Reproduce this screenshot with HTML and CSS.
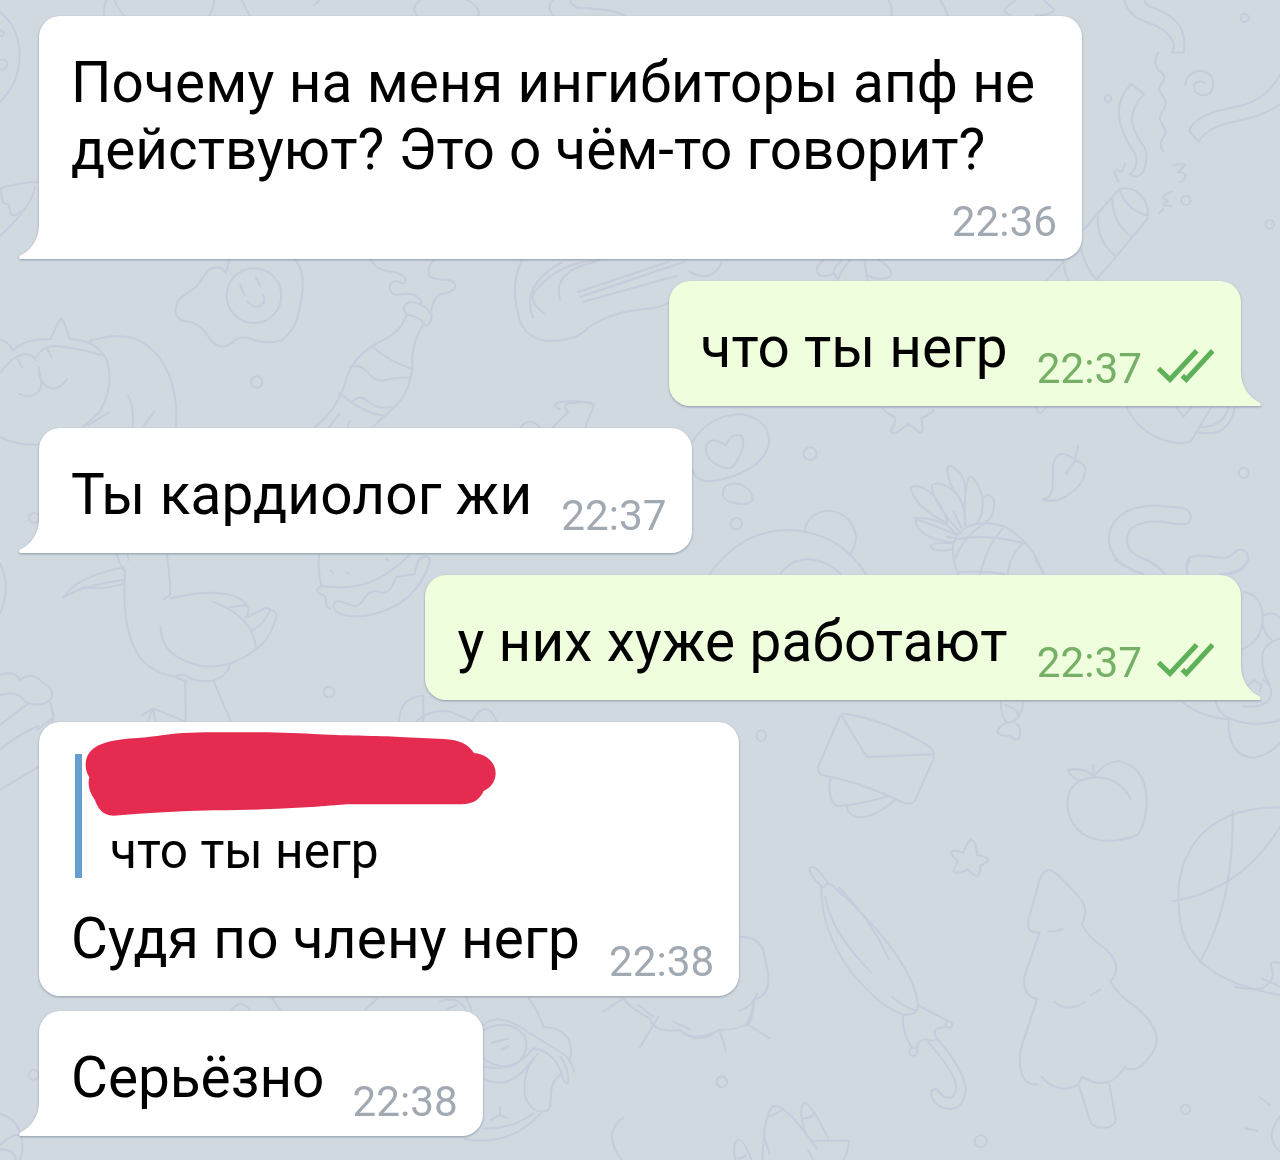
FILE: index.html
```html
<!DOCTYPE html>
<html lang="ru">
<head>
  <meta charset="UTF-8">
  <meta name="viewport" content="width=device-width, initial-scale=1.0">
  <title>Chat</title>
  <link rel="stylesheet" href="styles.css">
</head>
<body>

  <!-- Wallpaper doodles -->
  <svg class="wallpaper" viewBox="0 0 1280 1160" aria-hidden="true">
    <!-- cookie, carrot -->
    <g transform="scale(.408163 .333333)">
      <path d="M0 35Q48 85 48 165Q48 250 0 305M0 90Q12 97 10 103Q6 110 0 108M0 180Q18 176 18 194Q14 212 0 208"/>
      <path d="M0 565Q40 548 95 545M3 570Q5 600 8 608L22 614L25 640Q35 655 50 634M85 560Q82 595 60 628Q35 670 0 708"/>
      <path d="M260 0Q253 25 255 47M280 0Q290 30 305 47M525 0Q523 30 512 47M592 0L612 47M783 0L770 16M1030 0Q1005 25 1022 47M1145 0Q1180 25 1172 47M1355 0Q1335 22 1358 47M1397 0Q1400 20 1420 24Q1440 22 1455 27Q1500 28 1530 47"/>
    </g>
    <!-- party popper and streamers -->
    <g transform="translate(880 0) scale(.333333)">
      <path d="M25 0Q38 20 35 47M180 0Q195 22 204 47M408 0L374 25Q372 42 392 44M490 0L522 28Q520 45 466 46"/>
      <path d="M733 0Q745 50 800 66Q870 90 882 135Q882 150 875 157L912 158Q920 90 880 56Q845 30 815 22Q795 15 793 0"/>
      <path d="M835 157Q815 195 840 215Q865 232 843 252Q830 270 850 290Q866 312 846 336Q832 355 850 378Q865 395 845 420Q838 440 850 454"/>
      <path d="M754 252L792 283Q745 330 760 380Q770 410 795 445Q805 480 790 515Q770 540 750 522Q778 500 765 460Q720 400 716 340Q715 290 754 252Z"/>
      <path d="M916 256Q920 215 960 212Q1000 215 1000 255Q995 288 965 286Q938 280 943 255Q950 238 974 248"/>
      <path d="M1200 225Q1150 310 1060 322Q940 345 928 393L955 424Q985 380 1060 365Q1150 350 1200 312"/>
      <path d="M735 492L724 516Q705 508 702 515L716 546M880 496Q910 488 916 495L894 516Q915 518 916 524Q915 545 899 545M875 575Q850 582 850 596L865 602Q845 612 852 616L875 618M838 640L850 627"/>
      <path d="M610 690L717 568Q760 555 790 595Q808 625 803 655Q755 715 650 838M717 568Q745 635 800 645M697 592Q695 665 755 712M654 652Q650 720 705 767M604 748Q615 800 648 838M500 840L552 785Q552 815 565 840"/>
      <circle cx="1094" cy="54" r="12"/><circle cx="684" cy="295" r="10"/><circle cx="918" cy="601" r="14"/><circle cx="1169" cy="673" r="13"/>
    </g>
    <!-- guitar, bow -->
    <path d="M522 260Q510 285 518 312Q521 336 545 341Q575 342 588 328Q610 312 645 309Q672 308 690 284M533 318Q520 285 562 262M545 314Q525 300 538 288Q560 262 600 260M560 300Q552 270 596 262M578 292L668 262M580 297L684 262M583 302L676 276M690 272Q712 284 722 262"/>
    <g transform="translate(640 260) scale(.408163 .333333)">
      <path d="M450 0Q420 30 442 47Q465 50 475 38L485 60M495 0Q470 30 475 38M515 0Q490 35 485 60M550 0L557 60M585 0Q625 30 612 50Q590 65 555 45"/>
    </g>
    <!-- egg, cat, bottle -->
    <g transform="translate(0 240) scale(.333333)">
      <path d="M687 60L678 98Q660 70 625 90L590 140L550 167Q525 185 527 220Q535 245 575 247Q605 255 630 297Q665 340 705 300Q725 285 755 297Q800 315 845 300Q890 270 902 190Q920 100 887 60"/>
      <circle cx="762" cy="167" r="82"/>
      <path d="M720 133L733 164M768 113L781 139M743 184Q770 215 790 190Q795 178 790 165"/>
      <circle cx="770" cy="426" r="17"/>
      <path d="M0 298Q25 305 38 332Q75 295 152 297L178 242Q184 232 190 242L211 298Q290 300 320 360Q345 430 300 515L250 560M38 332L50 320M0 400Q35 350 70 343Q100 342 108 362M115 385Q130 430 120 448Q100 480 57 462M110 350Q130 315 165 318Q240 325 303 345M118 380Q110 400 130 430Q165 465 201 418M54 359L66 382M142 328L155 352M0 590Q50 618 115 614"/>
      <path d="M270 303Q340 280 400 295Q500 330 525 470Q532 520 527 560M385 468Q405 510 397 560M325 517L265 556M463 514L430 560"/>
      <path d="M1112 60Q1125 85 1160 93Q1215 98 1218 125Q1210 135 1195 124Q1165 120 1170 150Q1180 168 1200 163Q1255 155 1265 190M1303 60Q1280 75 1288 108Q1300 120 1340 119Q1372 125 1364 145Q1350 160 1318 162Q1298 180 1295 210"/>
      <path d="M1220 223L1210 207Q1215 185 1238 186Q1280 195 1295 225Q1295 250 1278 258L1272 250Q1255 230 1220 223Q1205 275 1150 300Q1055 345 1035 430Q1010 510 945 560M1272 250Q1240 300 1237 350Q1240 450 1180 505Q1140 540 1120 560M1115 318Q1160 360 1231 385M1052 378Q1085 372 1105 400Q1130 430 1165 418Q1200 410 1227 413M1019 458Q1080 515 1150 527M1060 483Q1080 462 1105 485Q1135 510 1175 500M1018 522L988 560M1050 542L1042 560"/>
    </g>
    <!-- thought bubble, pineapple, leaf, snake -->
    <g transform="translate(680 400) scale(.382653 .333333)">
      <path d="M33 125Q75 45 160 42Q240 60 232 135Q215 205 120 235Q45 260 33 210M120 136Q135 95 160 108Q175 130 150 180Q140 205 125 205Q65 190 67 140Q80 105 120 136ZM116 262Q130 245 160 253Q190 270 190 300Q175 318 145 310Q100 300 116 262"/>
      <ellipse cx="147" cy="371" rx="15" ry="17"/><ellipse cx="340" cy="161" rx="17" ry="19"/><ellipse cx="1473" cy="218" rx="13" ry="15"/>
      <path d="M78 522Q160 390 285 390Q415 395 486 522M325 392Q335 335 390 332Q450 340 460 410Q458 445 446 458M262 522Q290 477 340 477Q390 485 420 522"/>
      <path d="M532 26Q535 38 560 50Q567 65 550 92Q552 102 567 97L597 72L626 97Q635 100 635 90L631 54Q665 35 662 30M930 22Q940 55 956 22M1168 22Q1205 115 1305 130Q1335 130 1340 115L1388 22M1297 22L1316 50L1337 22M1362 82Q1420 80 1434 22M1354 97Q1435 115 1450 22"/>
      <path d="M723 405Q610 350 615 360Q620 415 715 428M723 405Q695 355 615 353M700 370Q610 320 603 262Q625 250 660 283Q690 325 700 370M735 400Q660 310 658 255Q680 240 718 275Q745 310 747 375M717 275Q695 230 700 200Q710 190 735 225Q748 250 745 290M745 375Q740 270 756 230Q775 230 790 290Q795 340 778 365M790 300Q805 270 820 300Q825 350 798 366M715 335L735 382M697 410L720 415M713 430Q660 425 655 438Q665 460 713 448"/>
      <path d="M726 522Q700 440 726 402Q770 350 850 380Q925 430 948 522M723 418Q800 400 900 430M797 369Q740 410 720 475M843 386Q800 440 785 522M896 429Q860 470 857 522M726 517Q790 510 850 522"/>
      <path d="M1040 137L1033 180L1009 220M1033 180Q1000 150 983 170Q972 190 975 230Q975 280 962 292L948 299Q960 305 990 300Q1055 265 1060 210Q1058 190 1033 180"/>
      <path d="M1210 522Q1120 490 1120 410Q1135 315 1250 317L1320 325Q1345 345 1330 368Q1315 378 1260 365Q1170 360 1168 420Q1168 460 1220 480Q1260 505 1265 522M1326 522Q1320 490 1330 475Q1345 460 1420 475Q1440 470 1457 450Q1485 445 1484 475Q1480 515 1435 522"/>
    </g>
    <!-- hat -->
    <path d="M552 428L568 412Q560 402 575 403Q590 400 594 405L585 428M560 409Q550 405 560 402Q580 400 592 404M520 428Q530 415 540 428"/>
    <circle cx="34" cy="518" r="5"/>
    <!-- stork, cake, burger -->
    <g transform="translate(0 530) scale(.333333)">
      <path d="M0 100Q35 170 0 250M350 70Q355 100 375 125M383 72L385 90M500 70Q512 150 510 195L492 208M372 112Q230 140 190 202Q250 165 375 150M190 202L250 172Q320 180 372 160M375 120L373 200Q375 330 430 395Q465 430 525 440M510 205Q680 165 738 220M638 215Q760 260 768 355M681 233L740 225Q752 240 738 262L795 235Q810 232 810 242Q790 285 755 303M810 242Q830 240 830 258Q810 330 768 358Q690 420 600 407Q480 380 482 288M525 440Q550 425 575 448Q600 455 640 452Q680 440 690 405M525 440L560 455M555 455L558 574M640 452L692 574M425 555L460 535L555 574M445 574L455 540M460 540L466 574"/>
      <path d="M0 435Q45 420 60 450Q95 420 130 460Q170 480 150 510Q120 535 75 515Q55 480 0 495M85 520L0 585M150 515Q160 550 158 565L110 600"/>
      <circle cx="987" cy="486" r="16"/>
      <path d="M957 72Q953 130 965 168Q1080 185 1160 130Q1200 105 1228 75M965 168Q945 175 955 190Q970 192 978 205Q975 230 990 237M1000 230Q1000 205 1040 220Q1070 240 1090 210Q1110 175 1140 187Q1165 190 1175 170L1190 140L1243 133L1255 90Q1285 65 1290 95Q1250 225 1110 255Q1015 270 1000 230M1040 125L1046 130M992 122L998 128M1158 86L1164 91"/>
      <path d="M1197 574Q1200 500 1270 497L1270 574M1250 574Q1290 535 1350 545L1420 574M1415 575Q1460 500 1490 574"/>
    </g>
    <g transform="translate(0 710) scale(.333333)">
      <path d="M0 118Q60 70 115 48M0 240L116 170M158 0Q165 20 155 38"/>
    </g>
    <!-- envelope, candy, peach, star, ball -->
    <g transform="translate(680 680) scale(.382653 .333333)">
      <ellipse cx="212" cy="167" rx="13" ry="16"/>
      <path d="M418 108Q425 98 440 103Q560 130 655 203Q665 213 663 235L615 360Q605 378 580 366Q470 305 370 285Q358 275 363 255ZM424 110L483 222Q488 232 500 231L663 223M393 294Q385 350 405 375Q430 385 545 348M436 380Q440 410 475 412Q510 410 565 357"/>
      <path d="M838 65Q838 110 855 127Q890 130 897 65M850 75Q880 85 885 105M855 127Q830 140 830 158Q840 170 862 167Q875 185 887 175Q895 145 878 130"/>
      <path d="M1045 303Q1015 285 1014 270Q1055 260 1080 288L1080 254M1045 303Q1080 285 1120 297Q1155 310 1178 356M1083 288Q1110 245 1145 243Q1220 260 1220 370Q1215 440 1195 465Q1160 482 1110 483Q1015 470 1012 365Q1015 320 1045 303"/>
      <path d="M761 478Q775 485 776 525Q800 528 807 540Q800 550 785 556Q787 580 777 590Q765 585 752 567Q735 580 716 578Q712 570 727 543Q710 530 708 515Q718 508 740 519Q750 485 761 478Z"/>
      <path d="M1568 382Q1420 380 1350 480Q1300 560 1303 650Q1303 700 1310 740Q1340 900 1568 945M1444 394Q1450 660 1359 845M1287 664Q1470 630 1568 440M1312 65Q1360 110 1432 118M1400 65Q1410 125 1500 132Q1550 130 1568 120M1434 118Q1430 230 1500 233Q1540 225 1568 188M1480 20L1500 0L1520 15L1515 35M1525 0Q1560 30 1535 65Q1510 85 1470 78"/>
      <path d="M1568 850Q1535 838 1548 870Q1555 905 1520 925Q1490 930 1450 920M1520 895L1568 920"/>
    </g>
    <g transform="translate(1020 560) scale(.333333)">
      <path d="M45 0Q65 20 72 42M285 0Q320 25 370 42M380 0Q420 20 435 42M510 0Q495 20 502 42M685 0Q660 42 600 42M670 95Q730 105 728 180Q725 245 665 268M735 165Q760 150 780 175M730 165Q722 215 755 240M780 235Q735 250 728 280Q720 330 750 375"/>
    </g>
    <!-- umbrella, fir tree, hand -->
    <g transform="translate(680 900) scale(.382653 .333333)">
      <path d="M372 -40Q340 -70 338 -95Q345 -105 360 -90L386 -55Q380 -35 369 -38M369 -38Q370 100 450 220Q530 330 588 344Q620 345 622 315Q610 190 440 0L400 -42Q390 -50 383 -48M380 -10Q390 90 500 218M415 -38Q500 60 546 178M555 290Q580 320 618 332M622 315L698 362M583 347Q580 400 605 440M692 380Q660 385 667 405L672 418Q655 428 645 418Q620 420 620 443M672 415Q735 500 747 560Q745 620 710 627Q665 625 657 585Q655 565 672 568Q690 598 710 592Q725 580 720 545Q700 490 647 425"/>
      <ellipse cx="703" cy="373" rx="9" ry="10"/><ellipse cx="610" cy="455" rx="11" ry="12"/><ellipse cx="109" cy="545" rx="14" ry="16"/><ellipse cx="786" cy="724" rx="16" ry="18"/><ellipse cx="1321" cy="628" rx="12" ry="14"/>
      <path d="M935 97Q905 100 910 60L940 -60Q950 -92 967 -90Q985 -85 1045 -5Q1070 25 1050 72Q1065 110 1110 145Q1160 195 1125 245Q1145 285 1190 320Q1275 400 1230 465Q1200 520 1165 505L1163 500Q1120 580 1050 530M940 97L900 230Q895 290 935 297M932 302L890 450Q880 560 935 553M945 530Q985 585 1040 555L1050 530M963 93Q980 98 1000 87M978 305Q1015 340 1057 306M1073 286L1098 269M1042 555L1072 665Q1085 690 1125 680Q1140 670 1138 655L1122 550"/>
      <path d="M155 110Q220 110 222 180Q250 280 193 300Q190 370 175 372Q150 390 100 390Q50 440 0 390M103 390L120 452M175 372L235 415M202 280Q190 320 155 332"/>
      <path d="M215 780Q220 630 245 618Q265 615 300 660Q340 715 358 747M228 650Q250 645 265 630M235 762Q220 720 218 690M330 705Q305 625 325 608Q340 605 388 716M320 655Q345 655 352 640M347 722L442 722Q440 750 428 780M145 780Q135 730 152 720Q165 715 187 780M150 775Q165 775 173 765M335 750L347 776M1515 592L1542 615M1478 685L1508 693M1568 650Q1525 710 1568 755"/>
    </g>
    <!-- pilot dog, sheep -->
    <g transform="translate(440 970) scale(.333333)">
      <path d="M0 95Q50 75 75 115M20 118L50 105M80 85L95 122M265 85Q300 130 310 172Q360 170 385 205Q400 235 388 275M130 165Q165 130 230 165L375 255Q400 280 402 305M130 180Q210 140 255 200Q270 250 225 285Q175 300 130 265M130 290Q220 310 280 235Q350 245 370 330Q385 350 385 325Q380 280 360 260M130 325Q210 370 280 265M295 250Q245 300 255 380Q280 440 325 420Q335 400 332 370Q335 330 365 310M155 218L205 206M185 238L205 228M180 410L180 435L202 445M180 435L152 450M130 475Q210 480 280 430M75 508Q210 530 300 432"/>
      <path d="M550 85L488 125M550 85Q570 115 630 145Q640 190 720 180Q760 220 835 182M920 160Q940 130 940 90M655 140L600 232M700 155L750 178M595 105L640 140M550 443Q485 490 545 570"/>
      <circle cx="846" cy="336" r="15"/>
    </g>
    <g transform="translate(0 980) scale(.333333)">
      <circle cx="101" cy="284" r="15"/>
      <path d="M0 403Q40 410 60 455Q75 500 60 540M0 495Q30 465 55 465M0 508Q45 510 48 540"/>
    </g>
    <path d="M232 1010Q240 998 250 1010M272 998L280 1010M365 1010L378 998"/>
  </svg>

  <main class="chat">
    <div class="message incoming stacked">
      <p class="text"><span class="wide">Почему на меня ингибиторы апф не</span><br>действуют? Это о чём-то говорит?</p>
      <span class="time">22:36</span>
      <svg class="tail" viewBox="0 0 22 34"><path d="M20 0C20 14 12 26 1 30.5Q-1 34 2 34H22V0Z"/></svg>
    </div>

    <div class="message outgoing">
      <p class="text">что ты негр</p>
      <span class="time">22:37</span>
      <svg class="checks" viewBox="0 0 57 34"><path d="M1.5 19.5L13 30.5L39.7 1.8M25.3 26.6L29.3 30.5L55.7 1.8"/></svg>
      <svg class="tail" viewBox="0 0 22 34"><path d="M20 0C20 14 12 26 1 30.5Q-1 34 2 34H22V0Z"/></svg>
    </div>

    <div class="message incoming">
      <p class="text wide">Ты кардиолог жи</p>
      <span class="time">22:37</span>
      <svg class="tail" viewBox="0 0 22 34"><path d="M20 0C20 14 12 26 1 30.5Q-1 34 2 34H22V0Z"/></svg>
    </div>

    <div class="message outgoing">
      <p class="text wide">у них хуже работают</p>
      <span class="time">22:37</span>
      <svg class="checks" viewBox="0 0 57 34"><path d="M1.5 19.5L13 30.5L39.7 1.8M25.3 26.6L29.3 30.5L55.7 1.8"/></svg>
      <svg class="tail" viewBox="0 0 22 34"><path d="M20 0C20 14 12 26 1 30.5Q-1 34 2 34H22V0Z"/></svg>
    </div>

    <div class="message incoming with-reply">
      <div class="reply">
        <p class="reply-text">что ты негр</p>
        <svg class="scribble" viewBox="255 66 1233 252"><path d="M257 165C258 120 290 95 380 86C440 84 480 76 510 73C560 67 620 67 700 67C780 66 870 67 940 72C1020 77 1140 77 1200 81L1330 87C1380 89 1405 103 1422 129C1460 132 1487 158 1487 190C1487 215 1470 236 1451 243C1438 270 1420 282 1385 283H1040C990 287 960 290 920 292C820 298 740 301 640 301C540 302 440 310 340 317C305 317 292 290 285 271C268 246 262 225 268 202C260 190 257 178 257 165Z"/></svg>
      </div>
      <div class="line">
        <p class="text wide">Судя по члену негр</p>
        <span class="time">22:38</span>
      </div>
    </div>

    <div class="message incoming grouped">
      <p class="text">Серьёзно</p>
      <span class="time">22:38</span>
      <svg class="tail" viewBox="0 0 22 34"><path d="M20 0C20 14 12 26 1 30.5Q-1 34 2 34H22V0Z"/></svg>
    </div>
  </main>

</body>
</html>
```
FILE: styles.css
```css
/* Reset default styles */
* {
  margin: 0;
  padding: 0;
  box-sizing: border-box;
}

body {
  position: relative;
  height: 1160px;
  overflow: hidden;
  font-family: Roboto, "Noto Sans", sans-serif;
  background: #d0d8e0;
}

/* Wallpaper */
.wallpaper {
  position: absolute;
  top: 0;
  left: 0;
  width: 1280px;
  height: 1160px;
  fill: none;
  stroke: #c5ccdb;
  stroke-width: 2;
  stroke-linecap: round;
  stroke-linejoin: round;
}

.wallpaper * {
  vector-effect: non-scaling-stroke;
}

/* Message list */
.chat {
  position: relative;
  display: flex;
  flex-direction: column;
  align-items: flex-start;
  gap: 22px;
  padding: 16px 39px;
}

.message {
  position: relative;
  display: flex;
  align-items: flex-end;
  height: 125px;
  padding: 33px 25px 12px 32px;
  border-radius: 21px;
  white-space: nowrap;
  filter: drop-shadow(0 1px 1px rgba(95, 115, 130, 0.6));
}

.incoming {
  background: #fff;
  border-bottom-left-radius: 0;
}

.outgoing {
  align-self: flex-end;
  padding-right: 27px;
  background: #effedd;
  border-bottom-right-radius: 0;
}

.stacked {
  flex-direction: column;
  width: 1043px;
  height: 243px;
}

.with-reply {
  flex-direction: column;
  align-items: flex-start;
  height: 274px;
  padding-top: 32px;
  padding-bottom: 9px;
  border-radius: 21px;
}

.grouped {
  margin-top: -7px;
  padding-bottom: 9px;
}

/* Message text */
.text {
  align-self: flex-start;
  font-size: 56.7px;
  line-height: 67px;
  color: #000;
}

.wide {
  letter-spacing: 0.15px;
}

.time {
  margin-left: 29px;
  font-size: 42.3px;
  line-height: 50px;
  color: #a1aab3;
}

.stacked .time {
  margin-top: 14px;
}

.outgoing .time {
  color: #75b066;
}

.grouped .time {
  margin-left: 28px;
}

.line {
  display: flex;
  align-items: flex-end;
  height: 82px;
  margin-top: 27px;
}

/* Read marks */
.checks {
  width: 57px;
  height: 34px;
  margin: 0 0 11px 15px;
  fill: none;
  stroke: #5fb159;
  stroke-width: 5;
}

/* Bubble tail */
.tail {
  position: absolute;
  bottom: 0;
  left: -20px;
  width: 22px;
  height: 34px;
  fill: #fff;
}

.outgoing .tail {
  left: auto;
  right: -20px;
  fill: #effedd;
  transform: scaleX(-1);
}

/* Quoted message */
.reply {
  position: relative;
  height: 124px;
  margin-left: 4px;
  padding: 68px 0 0 28px;
  border-left: 7px solid #649fd0;
}

.reply-text {
  font-size: 49.6px;
  line-height: 58px;
}

.scribble {
  position: absolute;
  top: -22px;
  left: 3px;
  width: 411px;
  height: 84px;
  fill: #e62b50;
}
```
